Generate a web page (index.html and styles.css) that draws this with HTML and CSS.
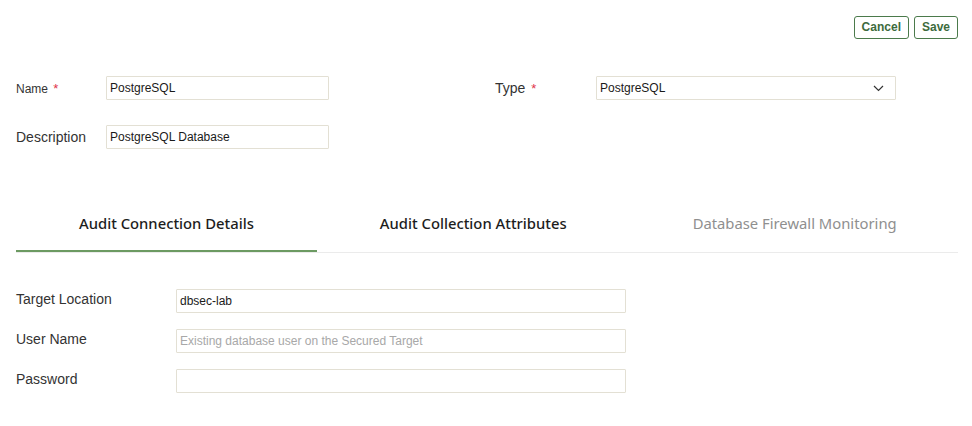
FILE: index.html
```html
<!DOCTYPE html>
<html>
<head>
<meta charset="utf-8">
<link rel="stylesheet" href="styles.css">
</head>
<body>
<div class="page">
  <div class="toolbar">
    <button class="btn">Cancel</button>
    <button class="btn">Save</button>
  </div>
  <div class="header-form">
    <div class="row">
      <div class="field">
        <label class="lbl lbl-small">Name <span class="req">*</span></label>
        <div class="input w222">PostgreSQL</div>
      </div>
      <div class="field type-field">
        <label class="lbl lbl-type">Type <span class="req">*</span></label>
        <div class="input select">PostgreSQL
          <svg class="chev" width="11" height="7" viewBox="0 0 11 7"><path d="M1 1 L5.5 5.5 L10 1" fill="none" stroke="#333" stroke-width="1.2"/></svg>
        </div>
      </div>
    </div>
    <div class="row row2">
      <div class="field">
        <label class="lbl">Description</label>
        <div class="input w222">PostgreSQL Database</div>
      </div>
    </div>
  </div>
  <div class="tabs">
    <div class="tab active">Audit Connection Details</div>
    <div class="tab">Audit Collection Attributes</div>
    <div class="tab disabled">Database Firewall Monitoring</div>
  </div>
  <div class="detail-form">
    <div class="drow">
      <label class="lbl dlbl">Target Location</label>
      <div class="input w449">dbsec-lab</div>
    </div>
    <div class="drow">
      <label class="lbl dlbl">User Name</label>
      <div class="input w449 placeholder">Existing database user on the Secured Target</div>
    </div>
    <div class="drow">
      <label class="lbl dlbl">Password</label>
      <div class="input w449"></div>
    </div>
  </div>
</div>
</body>
</html>
```
FILE: styles.css
```css
* { box-sizing: border-box; }
html, body { margin: 0; padding: 0; background: #fff; }
body { font-family: "Liberation Sans", Arial, sans-serif; color: #333; }
.page { width: 972px; padding: 0 14px 0 16px; }
.toolbar { display: flex; justify-content: flex-end; gap: 5px; padding-top: 16px; height: 39px; }
.btn {
  height: 23px; padding: 0 7px; border: 1px solid #4b7a4b; border-radius: 3px;
  background: #fff; color: #3d6b3d; font-family: "Liberation Sans", Arial, sans-serif;
  font-size: 12px; font-weight: bold; line-height: 21px;
}
.header-form { padding-top: 37px; }
.row { display: flex; height: 24px; }
.row2 { margin-top: 25px; }
.field { display: flex; align-items: center; }
.lbl { font-size: 14px; color: #333; }
.lbl-small { font-size: 12px; width: 90px; }
.field .lbl { width: 90px; }
.type-field { margin-left: 166px; }
.field .lbl-type { width: 101px; }
.req { color: #e0344a; font-size: 13px; margin-left: 2px; }
.input {
  height: 24px; border: 1px solid #e3e0d4; border-radius: 1px; padding: 0 3px;
  font-size: 12px; line-height: 22px; color: #1a1a1a; background: #fff;
}
.w222 { width: 223px; }
.select { width: 300px; position: relative; }
.chev { position: absolute; right: 11px; top: 8px; }
.tabs { display: flex; margin-top: 52px; border-bottom: 1px solid #ebebeb; height: 52px; }
.tab {
  flex-shrink: 0; white-space: nowrap;
  padding: 0 63px; font-family: "Noto Sans", "Open Sans", sans-serif; font-size: 14.8px;
  font-weight: 500; color: #1d1d1d; line-height: 44px; text-align: center;
}
.tab.active { border-bottom: 2px solid #6c9a62; }
.tab.disabled { color: #8f8f8f; font-weight: 400; }
.detail-form { padding-top: 36px; }
.drow { display: flex; align-items: center; height: 24px; margin-bottom: 16px; }
.dlbl { width: 160px; position: relative; top: -2px; }
.w449 { width: 450px; }
.placeholder { color: #a8a8a8; }
```
